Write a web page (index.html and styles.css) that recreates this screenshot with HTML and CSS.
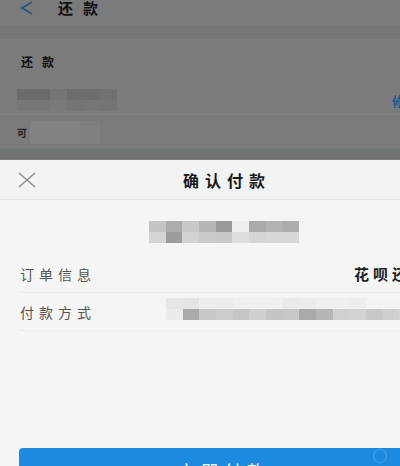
FILE: index.html
```html
<!DOCTYPE html>
<html lang="zh-CN">
<head>
    <meta charset="UTF-8">
    <meta name="viewport" content="width=device-width, initial-scale=1.0">
    <title>确认付款</title>
    <link rel="stylesheet" href="styles.css">
</head>
<body>
    <div class="page">
        <!-- 底层页面（被遮罩） -->
        <div class="under">
            <header class="nav">
                <svg class="nav-back" width="14" height="14" viewBox="0 0 14 14">
                    <polyline points="12,1 2,7 12,13" fill="none" stroke="#1f5b8a" stroke-width="2"/>
                </svg>
                <span class="nav-title">还款</span>
            </header>
            <div class="nav-gap"></div>
            <section class="repay">
                <div class="repay-title">还款</div>
                <div class="repay-card">
                    <div class="mosaic mosaic-card"></div>
                    <span class="repay-edit">修改</span>
                </div>
                <div class="repay-avail">
                    <span class="avail-label">可</span>
                    <div class="mosaic mosaic-avail"></div>
                </div>
            </section>
            <div class="under-edge"></div>
        </div>

        <!-- 付款弹层 -->
        <div class="sheet">
            <div class="sheet-head">
                <svg class="sheet-close" width="18" height="16" viewBox="0 0 18 16">
                    <path d="M1 1 L17 15 M17 1 L1 15" stroke="#8a8a8a" stroke-width="1.3" fill="none"/>
                </svg>
                <h2 class="sheet-title">确认付款</h2>
            </div>

            <div class="mosaic mosaic-amount"></div>

            <ul class="info-list">
                <li class="info-row">
                    <span class="info-label">订单信息</span>
                    <span class="info-value">花呗还款</span>
                </li>
                <li class="info-row">
                    <span class="info-label">付款方式</span>
                    <div class="mosaic mosaic-pay"></div>
                </li>
            </ul>

            <button class="pay-btn">立即付款<span class="pay-mark"></span></button>
        </div>
    </div>
</body>
</html>
```

FILE: styles.css
```css
* {
    box-sizing: border-box;
    margin: 0;
    padding: 0;
}

html, body {
    overflow: hidden;
    height: 100%;
}

body {
    font-family: "Noto Sans CJK SC", "Liberation Sans", sans-serif;
    background-color: #f5f5f5;
}

.page {
    width: 448px;
}

/* ---- 被遮罩的底层页面 ---- */
.under {
    background-color: #7b7b7b;
    height: 160px;
}

.nav {
    height: 27px;
    display: flex;
    align-items: flex-start;
    padding-left: 20px;
    border-bottom: 1px solid #727474;
}

.nav-back {
    margin-top: 1px;
}

.nav-title {
    margin-left: 24px;
    font-size: 15px;
    line-height: 16px;
    font-weight: bold;
    letter-spacing: 10px;
    color: #111;
}

.nav-gap {
    height: 13px;
    background-color: #767878;
    border-bottom: 1px solid #7f7f7f;
}

.repay {
    height: 109px;
}

.repay-title {
    padding: 15px 0 0 21px;
    font-size: 12px;
    line-height: 14px;
    font-weight: bold;
    letter-spacing: 9px;
    color: #111;
}

.repay-card {
    display: flex;
    align-items: flex-start;
    margin-top: 20px;
    padding: 0 18px 0 17px;
    height: 26px;
    border-bottom: 1px solid #818181;
}

.repay-edit {
    margin-left: auto;
    margin-top: 5px;
    font-size: 13px;
    line-height: 13px;
    font-weight: bold;
    letter-spacing: 6px;
    color: #1c5a8c;
}

.repay-avail {
    display: flex;
    align-items: center;
    padding-left: 17px;
    margin-top: 6px;
}

.avail-label {
    font-size: 10px;
    font-weight: bold;
    color: #222;
    margin-right: 3px;
}

.under-edge {
    height: 10px;
    background-color: #707373;
}

/* ---- 马赛克 ---- */
.mosaic {
    flex-shrink: 0;
}

.mosaic-card {
    width: 100px;
    height: 22px;
    background:
        linear-gradient(to right, #6b6b6b 0 33px, #757575 33px 50px, #6d6d6d 50px 83px, #717171 83px) top / 100% 11px no-repeat,
        linear-gradient(to right, #777 0 33px, #797979 33px 50px, #757575 50px 67px, #767676 67px 83px, #747474 83px) bottom / 100% 11px no-repeat;
}

.mosaic-avail {
    width: 70px;
    height: 23px;
    background: linear-gradient(to right, #838383 0 50px, #808080 50px);
}

.mosaic-amount {
    width: 150px;
    height: 22px;
    margin: 21px auto 0;
    background:
        linear-gradient(to right, #c4c4c4 0 17px, #acacac 17px 33px, #c8c8c8 33px 50px, #b6b6b6 50px 67px, #9a9a9a 67px 83px, #eeeeee 83px 100px, #aaaaaa 100px 117px, #b3b3b3 117px 133px, #adadad 133px) top / 100% 11px no-repeat,
        linear-gradient(to right, #d5d5d5 0 17px, #9c9c9c 17px 33px, #d2d2d2 33px 50px, #cacaca 50px 67px, #c9c9c9 67px 83px, #dddddd 83px 100px, #d6d6d6 100px 117px, #d8d8d8 117px) bottom / 100% 11px no-repeat;
}

.mosaic-pay {
    width: 267px;
    height: 22px;
    margin-left: 70px;
    margin-top: 5px;
    align-self: flex-start;
    background:
        linear-gradient(to right, #e6e6e6 0 17px, #e4e4e4 17px 33px, #eeeeee 33px 50px, #ececec 50px 67px, #efefef 67px 100px, #f0f0f0 100px 117px, #eaeaea 117px 133px, #ececec 133px 150px, #f0f0f0 150px 183px, #eeeeee 183px 200px, #f3f3f3 200px) top / 100% 11px no-repeat,
        linear-gradient(to right, #ebebeb 0 17px, #aaaaaa 17px 33px, #c8c8c8 33px 50px, #cccccc 50px 67px, #c6c6c6 67px 83px, #cfcfcf 83px 100px, #c5c5c5 100px 117px, #c8c8c8 117px 133px, #aaaaaa 133px 150px, #b5b5b5 150px 167px, #d0d0d0 167px 183px, #d2d2d2 183px 200px, #c8c8c8 200px 217px, #cfcfcf 217px 233px, #d5d5d5 233px) bottom / 100% 11px no-repeat;
}

/* ---- 弹层 ---- */
.sheet {
    background-color: #f5f5f5;
    height: 320px;
}

.sheet-head {
    position: relative;
    height: 40px;
    background-color: #f1f3f4;
    border-bottom: 1px solid #e2e5e6;
    display: flex;
    align-items: center;
    justify-content: center;
}

.sheet-close {
    position: absolute;
    left: 18px;
    top: 12px;
}

.sheet-title {
    font-size: 16px;
    font-weight: bold;
    letter-spacing: 6px;
    margin-right: -6px;
    color: #1a1a1a;
}

.info-list {
    list-style: none;
    margin-top: 12px;
    padding-left: 20px;
}

.info-row {
    display: flex;
    align-items: center;
    height: 38px;
    border-bottom: 1px solid #ebebeb;
}

.info-label {
    font-size: 14px;
    letter-spacing: 5px;
    color: #555;
}

.info-value {
    margin-left: auto;
    margin-right: 18px;
    font-size: 15px;
    font-weight: bold;
    letter-spacing: 4px;
    color: #222;
}

.pay-btn {
    position: relative;
    display: block;
    width: 410px;
    height: 44px;
    margin: 117px 0 0 19px;
    border: none;
    border-radius: 4px;
    background-color: #1d8ae0;
    color: white;
    font-family: inherit;
    font-size: 17px;
    letter-spacing: 6px;
    cursor: pointer;
}

.pay-mark {
    position: absolute;
    left: 354px;
    top: 1px;
    width: 14px;
    height: 14px;
    border: 1px solid rgba(255, 255, 255, 0.18);
    border-radius: 50%;
}
```
